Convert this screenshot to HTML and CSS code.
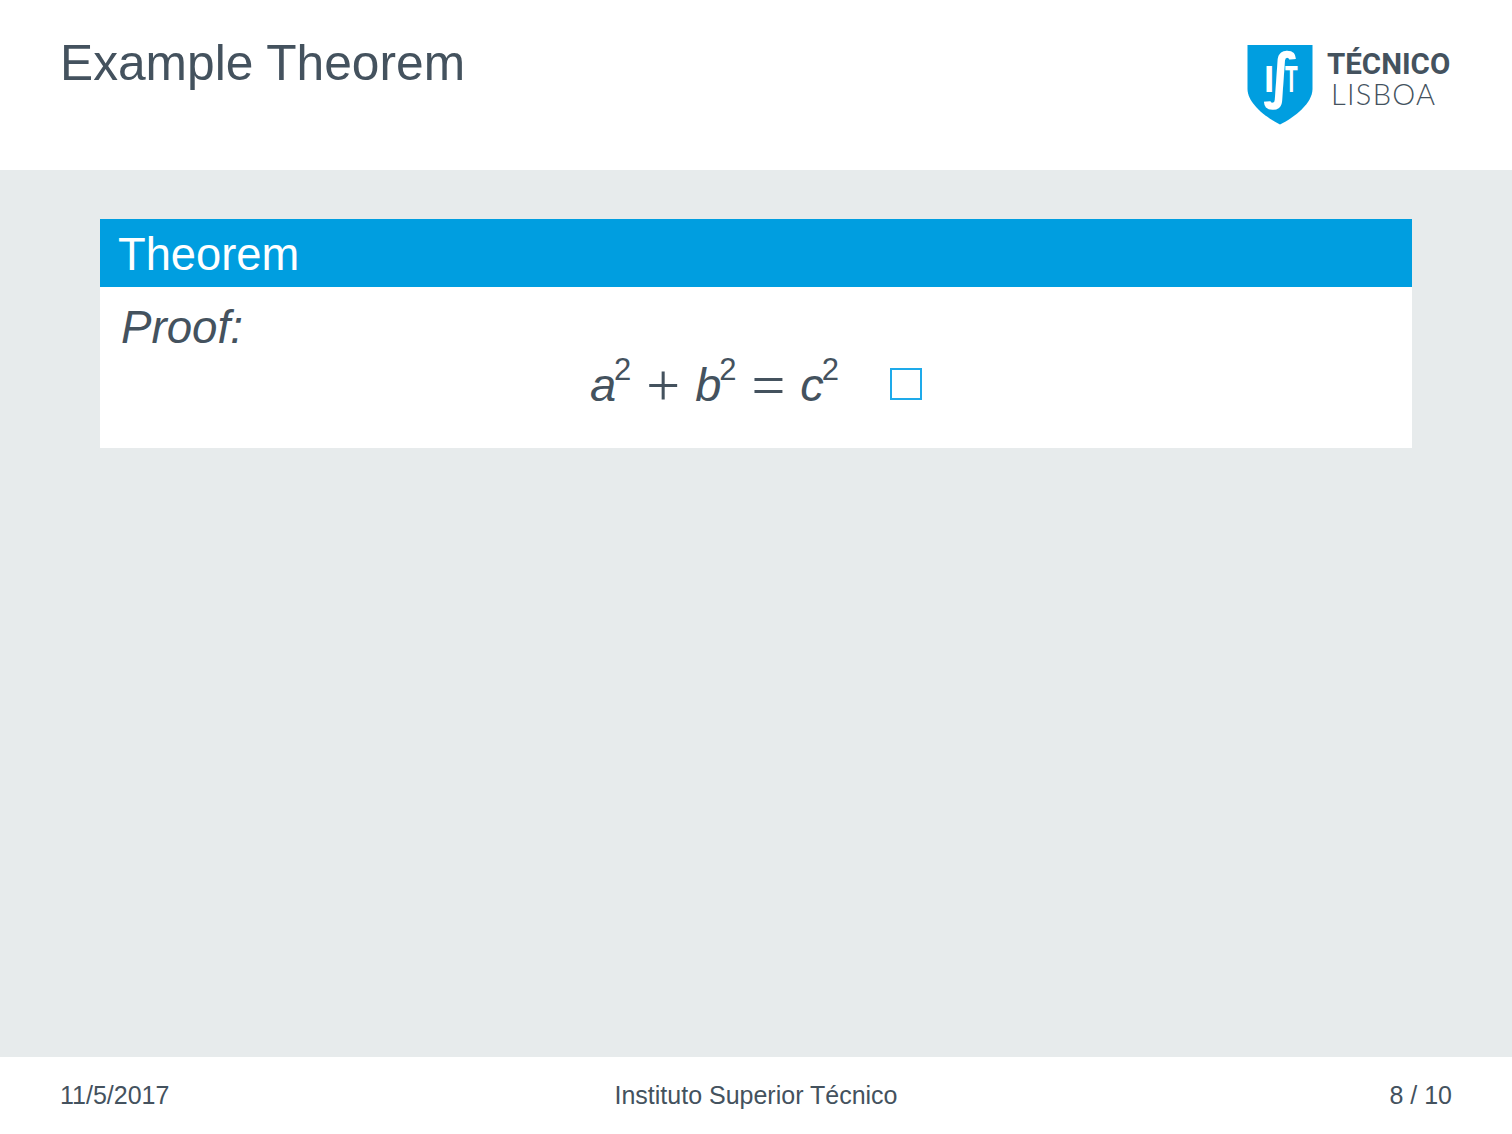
FILE: index.html
```html
<!DOCTYPE html>
<html lang="en">
<head>
<meta charset="utf-8">
<title>Example Theorem</title>
<link rel="stylesheet" href="styles.css">
</head>
<body>
<div class="slide">
  <header class="header">
    <h1 class="title">Example Theorem</h1>
    <div class="logo">
      <svg class="shield" width="66" height="80" viewBox="0 0 66 80" aria-hidden="true">
        <path d="M0.5 0H65.5V44C65.5 58 48 72 33 79.5C18 72 0.5 58 0.5 44Z" fill="#009ee0"/>
        <text class="mark mark-letter" x="17" y="47">I</text>
        <text class="mark mark-integral" x="16" y="51">∫</text>
        <text class="mark mark-letter" transform="translate(38 47) scale(0.56 1)">T</text>
      </svg>
      <div class="wordmark">
        <span class="word-top">TÉCNICO</span>
        <span class="word-bottom">LISBOA</span>
      </div>
    </div>
  </header>
  <main class="content">
    <section class="block">
      <h2 class="block-title">Theorem</h2>
      <div class="block-body">
        <p class="proof">Proof:</p>
        <div class="equation">
          <span class="var">a</span><sup class="pow">2</sup>
          <span class="op">+</span>
          <span class="var">b</span><sup class="pow">2</sup>
          <span class="op">=</span>
          <span class="var">c</span><sup class="pow">2</sup>
          <span class="qed"></span>
        </div>
      </div>
    </section>
  </main>
  <footer class="footer">
    <span class="foot-date">11/5/2017</span>
    <span class="foot-center">Instituto Superior Técnico</span>
    <span class="foot-page">8 / 10</span>
  </footer>
</div>
</body>
</html>
```
FILE: styles.css
```css
* { box-sizing: border-box; }
html, body { margin: 0; padding: 0; }
body {
  font-family: "Liberation Sans", Arial, sans-serif;
  color: #44525e;
  background: #fff;
}
.slide {
  width: 1512px;
  height: 1134px;
  display: flex;
  flex-direction: column;
  overflow: hidden;
}
.header {
  height: 170px;
  flex: none;
  padding: 45px 60px 0 60px;
  display: flex;
  justify-content: space-between;
  align-items: flex-start;
  background: #fff;
}
.title {
  margin: -10px 0 0 0;
  font-size: 49.7px;
  line-height: 56px;
  font-weight: 400;
}
.logo { display: flex; align-items: flex-start; gap: 14px; }
.shield { display: block; flex: none; overflow: visible; }
.mark { fill: #fff; }
.mark-letter {
  font-family: "Liberation Sans", sans-serif;
  font-size: 37px;
  font-weight: 700;
}
.mark-integral {
  font-family: "DejaVu Sans", sans-serif;
  font-size: 60px;
  font-weight: 700;
}
.wordmark { display: flex; flex-direction: column; width: 125px; padding-top: 2px; }
.word-top {
  font-family: Roboto, "Liberation Sans", sans-serif;
  font-size: 29.5px;
  line-height: 34px;
  font-weight: 700;
  white-space: nowrap;
  color: #44525e;
}
.word-bottom {
  margin-left: 4px;
  font-family: Lato, "Liberation Sans", sans-serif;
  font-size: 29px;
  line-height: 25px;
  font-weight: 300;
  letter-spacing: 1.3px;
  color: #44525e;
  white-space: nowrap;
}
.content {
  flex: 1;
  background: #e7ebec;
  padding: 49px 100px 0 100px;
}
.block { background: #fff; height: 229px; }
.block-title {
  margin: 0;
  height: 68px;
  padding: 0 0 0 18px;
  background: #009ee0;
  color: #fff;
  font-size: 45.3px;
  line-height: 71px;
  font-weight: 400;
}
.block-body { padding: 16px 21px 0 21px; }
.proof {
  margin: 0;
  font-size: 45.7px;
  line-height: 50px;
  font-style: italic;
}
.equation {
  display: flex;
  justify-content: center;
  align-items: baseline;
  margin-top: 7px;
  height: 50px;
  line-height: 50px;
  font-size: 47px;
}
.var { font-style: italic; }
.pow {
  font-size: 31px;
  line-height: 0;
  position: relative;
  top: -21px;
  vertical-align: baseline;
  margin-left: -2px;
}
.op {
  font-family: "Liberation Serif", serif;
  font-size: 60px;
  margin: 0 15px;
  position: relative;
  top: 4px;
  line-height: 0;
}
.qed {
  width: 32px;
  height: 32px;
  border: 2px solid #1eaaea;
  margin-left: 51px;
  align-self: center;
  position: relative;
  top: -1px;
}
.footer {
  height: 77px;
  flex: none;
  padding: 0 60px;
  display: grid;
  grid-template-columns: 1fr auto 1fr;
  align-items: center;
  font-size: 25px;
  background: #fff;
}
.foot-page { text-align: right; }
```
